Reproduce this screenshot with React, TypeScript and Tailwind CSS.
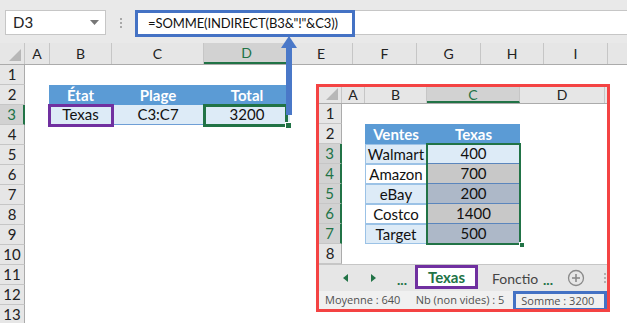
import React from "react";

const headCols = [
  { l: "A", c: "w-[25px]" },
  { l: "B", c: "w-[62px]" },
  { l: "C", c: "w-[92px]" },
  { l: "D", c: "w-[86px]", sel: true },
  { l: "E", c: "w-[63px]" },
  { l: "F", c: "w-[64px]" },
  { l: "G", c: "w-[64px]" },
  { l: "H", c: "w-[63px]" },
  { l: "I", c: "w-[64px]" },
];

const rowsOuter = Array.from({ length: 13 }, (_, i) => i + 1);

function Corner({ w }: { w: string }) {
  return (
    <div className={`${w} relative border-r border-[#c6c6c6]`}>
      <svg className="absolute right-[3px] bottom-[3px]" width="12" height="12" viewBox="0 0 12 12">
        <polygon points="12,0 12,12 0,12" fill="#b7b7b7" />
      </svg>
    </div>
  );
}

function RowHead({ n, sel, w }: { n: number; sel?: boolean; w: string }) {
  return (
    <div
      className={`${w} shrink-0 flex items-center justify-center border-b border-[#c6c6c6] text-[15px] ${
        sel ? "bg-[#d2d2d2] text-[#217346] border-r-2 border-r-[#217346]" : "bg-[#e6e6e6] text-[#222] border-r border-r-[#ababab]"
      }`}
    >
      {n}
    </div>
  );
}

const miniData = [
  { v: "Walmart", bb: "bg-[#ddebf7]", n: "400", cb: "bg-[#ddebf7]" },
  { v: "Amazon", bb: "bg-white", n: "700", cb: "bg-[#c8c8c8]" },
  { v: "eBay", bb: "bg-[#ddebf7]", n: "200", cb: "bg-[#adb8c8]" },
  { v: "Costco", bb: "bg-white", n: "1400", cb: "bg-[#c8c8c8]" },
  { v: "Target", bb: "bg-[#ddebf7]", n: "500", cb: "bg-[#adb8c8]" },
];

function MiniSheet() {
  return (
    <div className="absolute left-[316px] top-[84px] w-[294px] h-[228px] border-[3px] border-[#f44343] bg-white flex flex-col overflow-hidden">
      <div className="h-[17px] shrink-0 flex bg-[#e6e6e6] border-b border-[#ababab] text-[14px] leading-[16px] text-[#222]">
        <Corner w="w-[23px]" />
        <div className="w-[23px] border-r border-[#c6c6c6] text-center">A</div>
        <div className="w-[62px] border-r border-[#c6c6c6] text-center">B</div>
        <div className="w-[93px] border-r border-[#c6c6c6] border-b-2 border-b-[#217346] bg-[#d2d2d2] text-[#217346] text-center">C</div>
        <div className="w-[85px] border-r border-[#c6c6c6] text-center">D</div>
        <div className="flex-1" />
      </div>
      {Array.from({ length: 8 }, (_, i) => i + 1).map((r) => {
        const d = r >= 3 && r <= 7 ? miniData[r - 3] : null;
        return (
          <div key={r} className="h-[20px] shrink-0 flex text-[15px] text-[#111]">
            <RowHead n={r} sel={!!d} w="w-[23px]" />
            <div className="w-[23px]" />
            {r === 2 && (
              <>
                <div className="w-[62px] bg-[#5b9bd5] text-white font-bold flex items-center justify-center">Ventes</div>
                <div className="w-[93px] bg-[#5b9bd5] text-white font-bold flex items-center justify-center">Texas</div>
              </>
            )}
            {d && (
              <>
                <div className={`w-[62px] ${d.bb} border border-[#9bc2e6] flex items-center justify-center`}>{d.v}</div>
                <div className={`w-[93px] ${d.cb} border-b border-[#5b86bd] flex items-center justify-center`}>{d.n}</div>
              </>
            )}
          </div>
        );
      })}
      <div className="h-[27px] shrink-0 bg-[#e6e6e6] border-t border-[#c6c6c6] flex items-start">
        <div className="w-[12px]" />
        <div className="w-[28px] h-[26px] flex items-center justify-center">
          <svg width="5" height="8" viewBox="0 0 5 8"><polygon points="5,0 5,8 0,4" fill="#217346" /></svg>
        </div>
        <div className="w-[28px] h-[26px] flex items-center justify-center">
          <svg width="5" height="8" viewBox="0 0 5 8"><polygon points="0,0 0,8 5,4" fill="#217346" /></svg>
        </div>
        <div className="w-[28px] h-[26px] pl-[10px] flex items-center text-[#217346] font-bold text-[14px] leading-none pt-[4px]">...</div>
        <div className="w-[63px] h-[24px] bg-white border-[3px] border-[#7030a0] flex items-center justify-center text-[#217346] font-bold text-[15px]">
          Texas
        </div>
        <div className="ml-[14px] w-[47px] h-[26px] whitespace-nowrap flex items-center text-[14px] text-[#444]">
          Fonctio
        </div>
        <div className="ml-[4px] w-[14px] h-[26px] flex items-center text-[#217346] font-bold text-[14px] leading-none pt-[4px]">...</div>
        <div className="ml-[10px] h-[26px] flex items-center">
          <svg width="18" height="18" viewBox="0 0 18 18">
            <circle cx="9" cy="9" r="7.5" fill="none" stroke="#8a8a8a" strokeWidth="1.3" />
            <line x1="9" y1="5" x2="9" y2="13" stroke="#8a8a8a" strokeWidth="1.6" />
            <line x1="5" y1="9" x2="13" y2="9" stroke="#8a8a8a" strokeWidth="1.6" />
          </svg>
        </div>
        <div className="ml-[19px] h-[26px] flex flex-col items-center justify-center gap-[2px]">
          <div className="w-[2px] h-[2px] bg-[#b0b0b0]" />
          <div className="w-[2px] h-[2px] bg-[#b0b0b0]" />
          <div className="w-[2px] h-[2px] bg-[#b0b0b0]" />
        </div>
      </div>
      <div className="h-[18px] shrink-0 bg-[#f0f0f0] flex items-center text-[11px] text-[#505050] font-['Open_Sans',sans-serif] whitespace-nowrap">
        <div className="w-[97px] pl-[6px]">Moyenne : 640</div>
        <div className="w-[98px]">Nb (non vides) : 5</div>
        <div className="w-[94px] h-[20px] mb-[-2px] border-[3px] border-[#4472c4] flex items-center pl-[5px]">Somme : 3200</div>
      </div>
      {/* selection overlay */}
      <div className="absolute left-[107px] top-[56px] w-[95px] h-[102px] border-2 border-[#217346]" />
      <div className="absolute left-[200px] top-[155px] w-[6px] h-[6px] bg-[#217346] border border-white" />
    </div>
  );
}

export default function App() {
  return (
    <div className="relative w-[627px] h-[323px] overflow-hidden bg-white font-['Lato',sans-serif]">
      {/* formula bar area */}
      <div className="h-[43px] bg-[#e9e9e9] flex items-start pt-[10px]">
        <div className="ml-[5px] w-[101px] h-[25px] bg-white border border-[#c6c6c6] flex items-center justify-between pl-[7px] pr-[6px]">
          <span className="text-[15px] text-[#222]">D3</span>
          <svg width="9" height="5" viewBox="0 0 9 5"><polygon points="0,0 9,0 4.5,5" fill="#777" /></svg>
        </div>
        <div className="w-[29px] h-[25px] flex flex-col items-center justify-center gap-[2px]">
          <div className="w-[2px] h-[2px] bg-[#a8a8a8]" />
          <div className="w-[2px] h-[2px] bg-[#a8a8a8]" />
          <div className="w-[2px] h-[2px] bg-[#a8a8a8]" />
        </div>
        <div className="flex-1 h-[25px] bg-white border-y border-[#c6c6c6] flex">
          <div className="w-[220px] h-[27px] mt-[-1px] border-[3px] border-[#4472c4] flex items-center pl-[10px] text-[13px] tracking-[-0.1px] text-[#111] whitespace-nowrap">
            =SOMME(INDIRECT(B3&amp;"!"&amp;C3))
          </div>
        </div>
      </div>
      {/* column headers */}
      <div className="h-[22px] flex bg-[#e6e6e6] border-b border-[#ababab] text-[14px] text-[#222]">
        <Corner w="w-[25px]" />
        {headCols.map((c) => (
          <div
            key={c.l}
            className={`${c.c} shrink-0 border-r border-[#c6c6c6] flex items-center justify-center ${
              c.sel ? "bg-[#d2d2d2] text-[#217346] border-b-2 border-b-[#217346]" : ""
            }`}
          >
            {c.l}
          </div>
        ))}
        <div className="flex-1" />
      </div>
      {/* rows */}
      {rowsOuter.map((r) => (
        <div key={r} className="h-[20px] flex text-[15px] text-[#111]">
          <RowHead n={r} sel={r === 3} w="w-[25px]" />
          <div className="w-[24px]" />
          {r === 2 && (
            <>
              <div className="w-[63px] bg-[#5b9bd5] text-white font-bold flex items-center justify-center">État</div>
              <div className="w-[92px] bg-[#5b9bd5] text-white font-bold flex items-center justify-center">Plage</div>
              <div className="w-[86px] bg-[#5b9bd5] text-white font-bold flex items-center justify-center">Total</div>
            </>
          )}
          {r === 3 && (
            <>
              <div className="w-[63px] bg-[#ddebf7] border-b border-[#6f9fd6] flex items-center justify-center">Texas</div>
              <div className="w-[92px] bg-[#ddebf7] border-b border-[#6f9fd6] flex items-center justify-center">C3:C7</div>
              <div className="w-[86px] bg-[#ddebf7] border-b border-[#6f9fd6] flex items-center justify-center">3200</div>
            </>
          )}
        </div>
      ))}
      {/* highlight overlays */}
      <div className="absolute left-[48px] top-[104px] w-[66px] h-[23px] border-[3px] border-[#7030a0]" />
      <div className="absolute left-[203px] top-[104px] w-[85px] h-[23px] border-[3px] border-[#217346]" />
      <div className="absolute left-[285px] top-[122px] w-[7px] h-[7px] bg-[#217346] border border-white" />
      <svg className="absolute left-[280px] top-[35px]" width="20" height="82" viewBox="0 0 20 82">
        <rect x="6" y="10" width="6" height="70" fill="#4a78c8" />
        <polygon points="1,13 9,1 17,13" fill="#4a78c8" />
      </svg>
      <MiniSheet />
    </div>
  );
}
